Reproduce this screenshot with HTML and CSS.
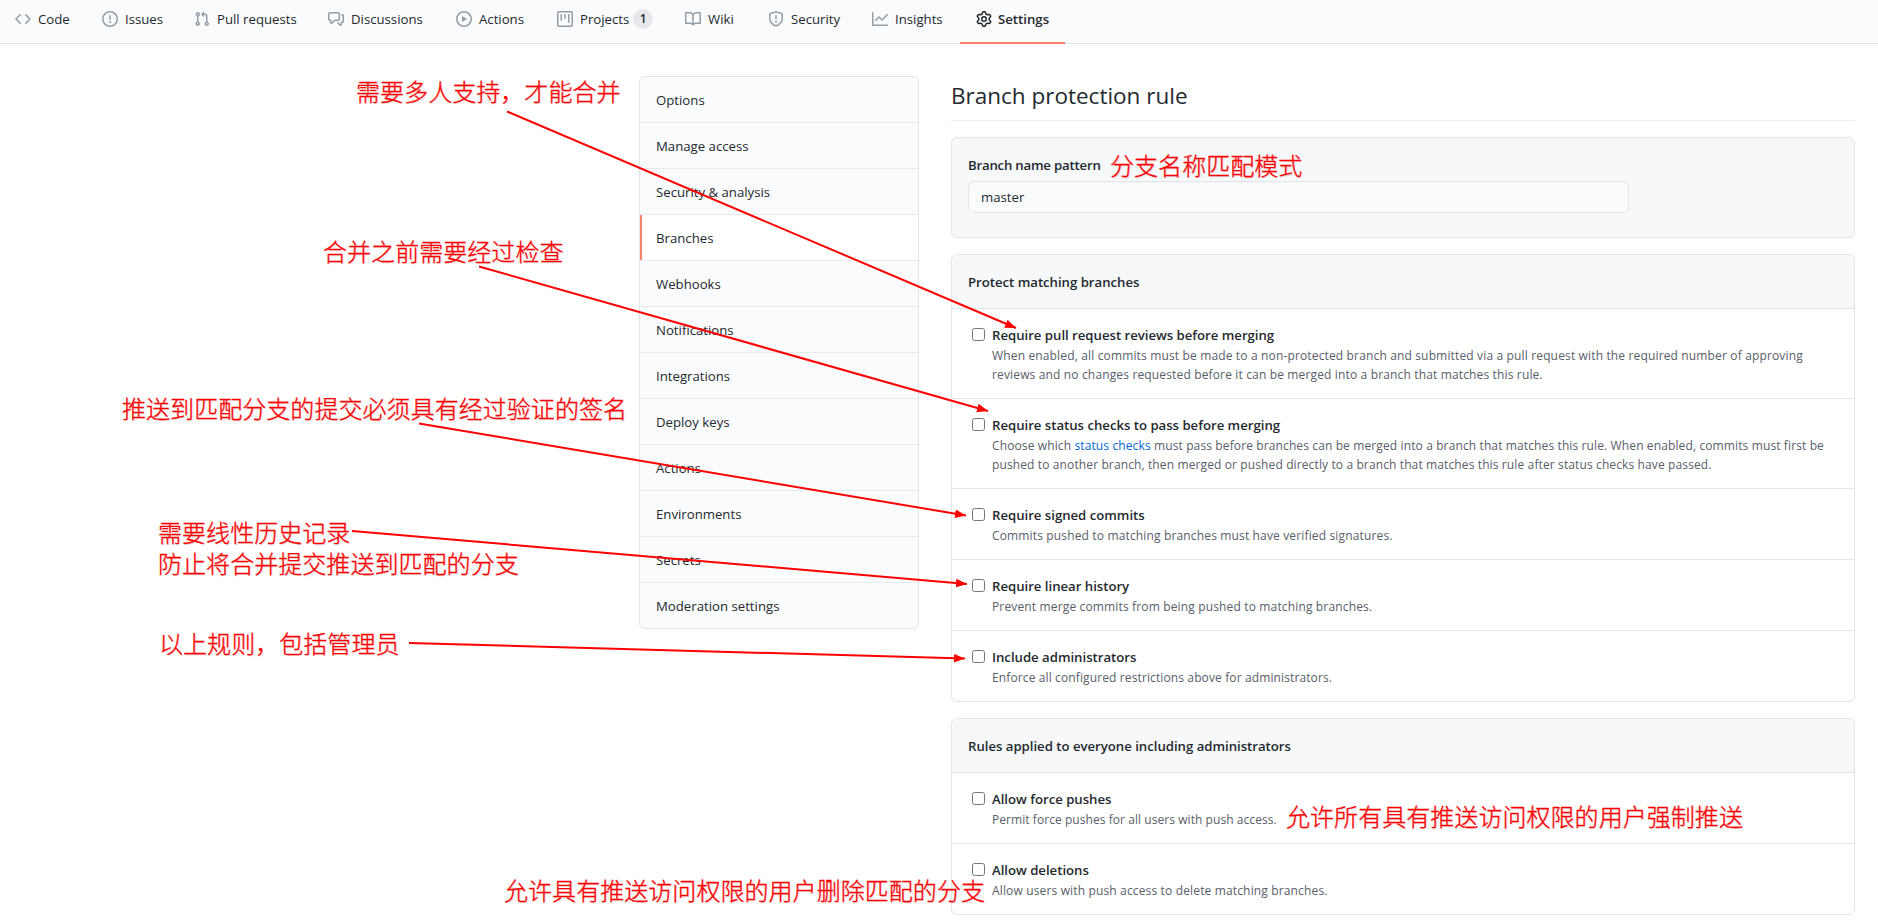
FILE: index.html
```html
<!DOCTYPE html>
<html lang="en">
<head>
<meta charset="utf-8">
<title>Branch protection rule</title>
<link rel="stylesheet" href="styles.css">
</head>
<body>
<nav class="repo-nav">
  <a class="tab tab-code"><svg class="icon" viewBox="0 0 16 16"><path fill-rule="evenodd" d="M4.72 3.22a.75.75 0 011.06 1.06L2.06 8l3.72 3.72a.75.75 0 11-1.06 1.06L.47 8.53a.75.75 0 010-1.06l4.25-4.25zm6.56 0a.75.75 0 10-1.06 1.06L13.94 8l-3.72 3.72a.75.75 0 101.06 1.06l4.25-4.25a.75.75 0 000-1.06l-4.25-4.25z"/></svg><span>Code</span></a>
  <a class="tab tab-issues"><svg class="icon" viewBox="0 0 16 16"><path fill-rule="evenodd" d="M8 1.5a6.5 6.5 0 100 13 6.5 6.5 0 000-13zM0 8a8 8 0 1116 0A8 8 0 010 8zm9 3a1 1 0 11-2 0 1 1 0 012 0zm-.25-6.25a.75.75 0 00-1.5 0v3.5a.75.75 0 001.5 0v-3.5z"/></svg><span>Issues</span></a>
  <a class="tab tab-pulls"><svg class="icon" viewBox="0 0 16 16"><path fill-rule="evenodd" d="M7.177 3.073L9.573.677A.25.25 0 0110 .854v4.792a.25.25 0 01-.427.177L7.177 3.427a.25.25 0 010-.354zM3.75 2.5a.75.75 0 100 1.5.75.75 0 000-1.5zm-2.25.75a2.25 2.25 0 113 2.122v5.256a2.251 2.251 0 11-1.5 0V5.372A2.25 2.25 0 011.5 3.25zM11 2.5h-1V4h1a1 1 0 011 1v5.628a2.251 2.251 0 101.5 0V5A2.5 2.5 0 0011 2.5zm1 10.25a.75.75 0 111.5 0 .75.75 0 01-1.5 0zM3.75 12a.75.75 0 100 1.5.75.75 0 000-1.5z"/></svg><span>Pull requests</span></a>
  <a class="tab tab-discussions"><svg class="icon" viewBox="0 0 16 16"><path fill-rule="evenodd" d="M1.5 2.75a.25.25 0 01.25-.25h8.5a.25.25 0 01.25.25v5.5a.25.25 0 01-.25.25h-3.5a.75.75 0 00-.53.22L3.5 11.44V9.25a.75.75 0 00-.75-.75h-1a.25.25 0 01-.25-.25v-5.5zM1.75 1A1.75 1.75 0 000 2.75v5.5C0 9.216.784 10 1.75 10H2v1.543a1.457 1.457 0 002.487 1.03L7.061 10h3.189A1.75 1.75 0 0012 8.25v-5.5A1.75 1.75 0 0010.25 1h-8.5zM14.5 4.75a.25.25 0 00-.25-.25h-.5a.75.75 0 110-1.5h.5c.966 0 1.75.784 1.75 1.75v5.5A1.75 1.75 0 0114.25 12H14v1.543a1.457 1.457 0 01-2.487 1.03L9.22 12.28a.75.75 0 111.06-1.06l2.22 2.22v-2.19a.75.75 0 01.75-.75h1a.25.25 0 00.25-.25v-5.5z"/></svg><span>Discussions</span></a>
  <a class="tab tab-actions"><svg class="icon" viewBox="0 0 16 16"><path fill-rule="evenodd" d="M1.5 8a6.5 6.5 0 1113 0 6.5 6.5 0 01-13 0zM8 0a8 8 0 100 16A8 8 0 008 0zM6.379 5.227A.25.25 0 006 5.442v5.117a.25.25 0 00.379.214l4.264-2.559a.25.25 0 000-.428L6.379 5.227z"/></svg><span>Actions</span></a>
  <a class="tab tab-projects"><svg class="icon" viewBox="0 0 16 16"><path fill-rule="evenodd" d="M1.75 0A1.75 1.75 0 000 1.75v12.5C0 15.216.784 16 1.75 16h12.5A1.75 1.75 0 0016 14.25V1.75A1.75 1.75 0 0014.25 0H1.75zM1.5 1.75a.25.25 0 01.25-.25h12.5a.25.25 0 01.25.25v12.5a.25.25 0 01-.25.25H1.75a.25.25 0 01-.25-.25V1.75zM11.75 3a.75.75 0 00-.75.75v7.5a.75.75 0 001.5 0v-7.5a.75.75 0 00-.75-.75zm-8.25.75a.75.75 0 011.5 0v5.5a.75.75 0 01-1.5 0v-5.5zM8 3a.75.75 0 00-.75.75v3.5a.75.75 0 001.5 0v-3.5A.75.75 0 008 3z"/></svg><span>Projects</span><b class="counter">1</b></a>
  <a class="tab tab-wiki"><svg class="icon" viewBox="0 0 16 16"><path fill-rule="evenodd" d="M0 1.75A.75.75 0 01.75 1h4.253c1.227 0 2.317.59 3 1.501A3.744 3.744 0 0111.006 1h4.245a.75.75 0 01.75.75v10.5a.75.75 0 01-.75.75h-4.507a2.25 2.25 0 00-1.591.659l-.622.621a.75.75 0 01-1.06 0l-.622-.621A2.25 2.25 0 005.258 13H.75a.75.75 0 01-.75-.75V1.75zm8.755 3a2.25 2.25 0 012.25-2.25H14.5v9h-3.757c-.71 0-1.4.201-1.992.572l.004-7.322zm-1.504 7.324l.004-5.073-.002-2.253A2.25 2.25 0 005.003 2.5H1.5v9h3.757a3.75 3.75 0 011.994.574z"/></svg><span>Wiki</span></a>
  <a class="tab tab-security"><svg class="icon" viewBox="0 0 16 16"><path fill-rule="evenodd" d="M7.467.133a1.75 1.75 0 011.066 0l5.25 1.68A1.75 1.75 0 0115 3.48V7c0 1.566-.32 3.182-1.303 4.682-.983 1.498-2.585 2.813-5.032 3.855a1.7 1.7 0 01-1.33 0c-2.447-1.042-4.049-2.357-5.032-3.855C1.32 10.182 1 8.566 1 7V3.48a1.75 1.75 0 011.217-1.667l5.25-1.68zm.61 1.429a.25.25 0 00-.153 0l-5.25 1.68a.25.25 0 00-.174.238V7c0 1.358.275 2.666 1.057 3.86.784 1.194 2.121 2.34 4.366 3.297a.2.2 0 00.154 0c2.245-.956 3.582-2.104 4.366-3.298C13.225 9.666 13.5 8.36 13.5 7V3.48a.25.25 0 00-.174-.237l-5.25-1.68zM9 10.5a1 1 0 11-2 0 1 1 0 012 0zm-.25-5.75a.75.75 0 10-1.5 0v3a.75.75 0 001.5 0v-3z"/></svg><span>Security</span></a>
  <a class="tab tab-insights"><svg class="icon" viewBox="0 0 16 16"><path fill-rule="evenodd" d="M1.5 1.75a.75.75 0 00-1.5 0v12.5c0 .414.336.75.75.75h14.5a.75.75 0 000-1.5H1.5V1.75zm14.28 2.53a.75.75 0 00-1.06-1.06L10 7.94 7.53 5.47a.75.75 0 00-1.06 0L3.22 8.72a.75.75 0 001.06 1.06L7 7.06l2.47 2.47a.75.75 0 001.06 0l5.25-5.25z"/></svg><span>Insights</span></a>
  <a class="tab tab-settings selected"><svg class="icon" viewBox="0 0 16 16"><path fill-rule="evenodd" d="M7.429 1.525a6.593 6.593 0 011.142 0c.036.003.108.036.137.146l.289 1.105c.147.56.55.967.997 1.189.174.086.341.183.501.29.417.278.97.423 1.53.27l1.102-.303c.11-.03.175.016.195.046.219.31.41.641.573.989.014.031.022.11-.059.19l-.815.806c-.411.406-.562.957-.53 1.456a4.588 4.588 0 010 .582c-.032.499.119 1.05.53 1.456l.815.806c.08.08.073.159.059.19a6.494 6.494 0 01-.573.99c-.02.029-.086.074-.195.045l-1.103-.303c-.559-.153-1.112-.008-1.529.27-.16.107-.327.204-.5.29-.449.222-.851.628-.998 1.189l-.289 1.105c-.029.11-.101.143-.137.146a6.613 6.613 0 01-1.142 0c-.036-.003-.108-.037-.137-.146l-.289-1.105c-.147-.56-.55-.967-.997-1.189a4.502 4.502 0 01-.501-.29c-.417-.278-.97-.423-1.53-.27l-1.102.303c-.11.03-.175-.016-.195-.046a6.492 6.492 0 01-.573-.989c-.014-.031-.022-.11.059-.19l.815-.806c.411-.406.562-.957.53-1.456a4.587 4.587 0 010-.582c.032-.499-.119-1.05-.53-1.456l-.815-.806c-.08-.08-.073-.159-.059-.19a6.44 6.44 0 01.573-.99c.02-.029.086-.075.195-.045l1.103.303c.559.153 1.112.008 1.529-.27.16-.107.327-.204.5-.29.449-.222.851-.628.998-1.189l.289-1.105c.029-.11.101-.143.137-.146zM8 0c-.236 0-.47.01-.701.03-.743.065-1.29.615-1.458 1.261l-.29 1.106c-.017.066-.078.158-.211.224a5.994 5.994 0 00-.668.386c-.123.082-.233.09-.3.071L3.27 2.776c-.644-.177-1.392.02-1.82.63a7.977 7.977 0 00-.704 1.217c-.315.675-.111 1.422.363 1.891l.815.806c.05.048.098.147.088.294a6.084 6.084 0 000 .772c.01.147-.038.246-.088.294l-.815.806c-.474.469-.678 1.216-.363 1.891.2.428.436.835.704 1.218.428.609 1.176.806 1.82.63l1.103-.303c.066-.019.176-.011.299.071.213.143.436.272.668.386.133.066.194.158.212.224l.289 1.106c.169.646.715 1.196 1.458 1.26a8.094 8.094 0 001.402 0c.743-.064 1.29-.614 1.458-1.26l.29-1.106c.017-.066.078-.158.211-.224a5.98 5.98 0 00.668-.386c.123-.082.233-.09.3-.071l1.102.302c.644.177 1.392-.02 1.82-.63.268-.382.505-.789.704-1.217.315-.675.111-1.422-.364-1.891l-.814-.806c-.05-.048-.098-.147-.088-.294a6.1 6.1 0 000-.772c-.01-.147.039-.246.088-.294l.814-.806c.475-.469.679-1.216.364-1.891a7.992 7.992 0 00-.704-1.218c-.428-.609-1.176-.806-1.82-.63l-1.103.303c-.066.019-.176.011-.299-.071a5.991 5.991 0 00-.668-.386c-.133-.066-.194-.158-.212-.224L10.16 1.29C9.99.645 9.444.095 8.701.031A8.094 8.094 0 008 0zm1.5 8a1.5 1.5 0 11-3 0 1.5 1.5 0 013 0zM11 8a3 3 0 11-6 0 3 3 0 016 0z"/></svg><span>Settings</span></a>
</nav>
<div class="page">
  <aside class="menu">
    <a class="menu-item">Options</a>
    <a class="menu-item">Manage access</a>
    <a class="menu-item">Security &amp; analysis</a>
    <a class="menu-item current">Branches</a>
    <a class="menu-item">Webhooks</a>
    <a class="menu-item">Notifications</a>
    <a class="menu-item">Integrations</a>
    <a class="menu-item">Deploy keys</a>
    <a class="menu-item">Actions</a>
    <a class="menu-item">Environments</a>
    <a class="menu-item">Secrets</a>
    <a class="menu-item">Moderation settings</a>
  </aside>
  <main class="content">
    <h2 class="title">Branch protection rule</h2>
    <section class="box pattern">
      <label class="strong pattern-label">Branch name pattern</label>
      <input class="pattern-input" type="text" value="master">
    </section>
    <section class="box">
      <header class="box-header strong">Protect matching branches</header>
      <div class="rule"><input type="checkbox" class="check"><div><div class="strong rule-name">Require pull request reviews before merging</div>
        <p class="note">When enabled, all commits must be made to a non-protected branch and submitted via a pull request with the required number of approving<br>reviews and no changes requested before it can be merged into a branch that matches this rule.</p></div></div>
      <div class="rule"><input type="checkbox" class="check"><div><div class="strong rule-name">Require status checks to pass before merging</div>
        <p class="note note-tight">Choose which <a class="link">status checks</a> must pass before branches can be merged into a branch that matches this rule. When enabled, commits must first be<br>pushed to another branch, then merged or pushed directly to a branch that matches this rule after status checks have passed.</p></div></div>
      <div class="rule"><input type="checkbox" class="check"><div><div class="strong rule-name">Require signed commits</div>
        <p class="note">Commits pushed to matching branches must have verified signatures.</p></div></div>
      <div class="rule"><input type="checkbox" class="check"><div><div class="strong rule-name">Require linear history</div>
        <p class="note">Prevent merge commits from being pushed to matching branches.</p></div></div>
      <div class="rule"><input type="checkbox" class="check"><div><div class="strong rule-name">Include administrators</div>
        <p class="note note-tight">Enforce all configured restrictions above for administrators.</p></div></div>
    </section>
    <section class="box">
      <header class="box-header strong">Rules applied to everyone including administrators</header>
      <div class="rule"><input type="checkbox" class="check"><div><div class="strong rule-name">Allow force pushes</div>
        <p class="note note-tighter">Permit force pushes for all users with push access.</p></div></div>
      <div class="rule"><input type="checkbox" class="check"><div><div class="strong rule-name">Allow deletions</div>
        <p class="note">Allow users with push access to delete matching branches.</p></div></div>
    </section>
  </main>
</div>
<svg class="arrows" width="1878" height="922" viewBox="0 0 1878 922">
  <defs><marker id="head" markerUnits="userSpaceOnUse" markerWidth="12" markerHeight="10" refX="11" refY="5" orient="auto"><path d="M0 .7 11 5 0 9.3z" fill="#f00" stroke="none"/></marker></defs>
  <g stroke="#f00" stroke-width="2">
    <path marker-end="url(#head)" d="M507 111.5 1016 328"/>
    <path marker-end="url(#head)" d="M479 266.5 988 411"/>
    <path marker-end="url(#head)" d="M419 423.5 966 515.5"/>
    <path marker-end="url(#head)" d="M352 531 967 584"/>
    <path marker-end="url(#head)" d="M409 643 965 658.5"/>
  </g>
</svg>
<div class="remark r-reviews" lang="zh">需要多人支持，才能合并</div>
<div class="remark r-checks" lang="zh">合并之前需要经过检查</div>
<div class="remark r-signed" lang="zh">推送到匹配分支的提交必须具有经过验证的签名</div>
<div class="remark r-linear" lang="zh">需要线性历史记录<br>防止将合并提交推送到匹配的分支</div>
<div class="remark r-admins" lang="zh">以上规则，包括管理员</div>
<div class="remark r-pattern" lang="zh">分支名称匹配模式</div>
<div class="remark r-force" lang="zh">允许所有具有推送访问权限的用户强制推送</div>
<div class="remark r-delete" lang="zh">允许具有推送访问权限的用户删除匹配的分支</div>
</body>
</html>
```
FILE: styles.css
```css
* { box-sizing: border-box; }
body {
  margin: 0;
  width: 1878px;
  height: 922px;
  overflow: hidden;
  position: relative;
  background: #fff;
  color: #24292e;
  font: 13.2px/21px "Open Sans", "Noto Sans", sans-serif;
}

.repo-nav { display: flex; height: 44px; background: #fafbfc; border-bottom: 1px solid #e1e4e8; margin-left: -1px; }
.tab { display: flex; height: 44px; padding: 0 0 6px 16px; align-items: center; white-space: nowrap; }
.icon { width: 16px; height: 16px; margin-right: 7px; fill: #959da5; flex: none; }
.tab-code { width: 87px; }
.tab-issues { width: 92px; }
.tab-pulls { width: 134px; }
.tab-discussions { width: 128px; }
.tab-actions { width: 101px; }
.tab-projects { width: 128px; }
.tab-wiki { width: 83px; }
.tab-security { width: 104px; }
.tab-insights { width: 104px; }
.tab-settings { width: 105px; }
.selected { font-weight: 600; border-bottom: 2px solid #f9826c; padding-bottom: 4px; }
.selected .icon { fill: #24292e; margin-right: 6px; }
.counter { min-width: 20px; height: 20px; margin-left: 4px; border-radius: 10px; background: #e6e8eb; font-size: 12px; font-weight: 600; line-height: 19px; text-align: center; }

.page { display: flex; gap: 32px; align-items: flex-start; padding: 32px 23px 0 639px; }
.menu { width: 280px; border: 1px solid #e1e4e8; border-radius: 6px; background: #fafbfc; overflow: hidden; flex: none; }
.menu-item { display: block; height: 46px; padding: 13px 16px 0; border-bottom: 1px solid #e6e9ed; }
.menu-item:last-child { height: 45px; border-bottom: 0; }
.current { background: #fff; box-shadow: inset 2px 0 #f9826c; }

.content { flex: 1; display: flex; flex-direction: column; gap: 16px; }
.title { margin: 0; height: 45px; border-bottom: 1px solid #eaecef; font-size: 22.5px; line-height: 39px; font-weight: 400; }
.strong { font-weight: 600; }
.box { border: 1px solid #e1e4e8; border-radius: 6px; overflow: hidden; }
.pattern { height: 101px; padding: 17px 16px; background: #f6f8fa; }
.pattern-label { display: block; height: 26px; letter-spacing: -.2px; }
.pattern-input { display: block; width: 661px; height: 32px; padding: 0 12px; border: 1px solid #e1e4e8; border-radius: 6px; background: #fafbfc; color: #24292e; font: inherit; box-shadow: inset 0 1px 0 rgba(225, 228, 232, .2); }
.box-header { height: 54px; padding: 17px 16px 0; letter-spacing: -.02px; background: #f6f8fa; border-bottom: 1px solid #e1e4e8; }
.rule { display: flex; padding: 16px 16px 14px 20px; border-bottom: 1px solid #e1e4e8; }
.rule:last-child { border-bottom: 0; }
.check { width: 13px; height: 13px; margin: 3px 7px 0 0; flex: none; }
.rule-name { line-height: 20px; letter-spacing: -.02px; }
.note { margin: 1px 0 0; font-size: 12px; line-height: 19px; letter-spacing: .15px; color: #586069; white-space: nowrap; }
.note-tight { letter-spacing: .12px; }
.note-tighter { letter-spacing: .06px; }
.link { color: #0366d6; }

.arrows { position: absolute; left: 0; top: 0; fill: none; pointer-events: none; }
.remark { position: absolute; color: #f00; font: 300 24px/31px "Noto Sans CJK SC", sans-serif; letter-spacing: .05px; white-space: nowrap; -webkit-text-stroke: .3px #f00; text-shadow: 1px 1px 1px rgba(0, 0, 0, .15); }
.r-reviews { left: 356px; top: 75px; }
.r-checks { left: 323px; top: 235px; }
.r-signed { left: 122px; top: 392px; }
.r-linear { left: 158px; top: 516px; }
.r-admins { left: 159px; top: 627px; }
.r-pattern { left: 1110px; top: 149px; }
.r-force { left: 1286px; top: 800px; }
.r-delete { left: 504px; top: 874px; }
```
